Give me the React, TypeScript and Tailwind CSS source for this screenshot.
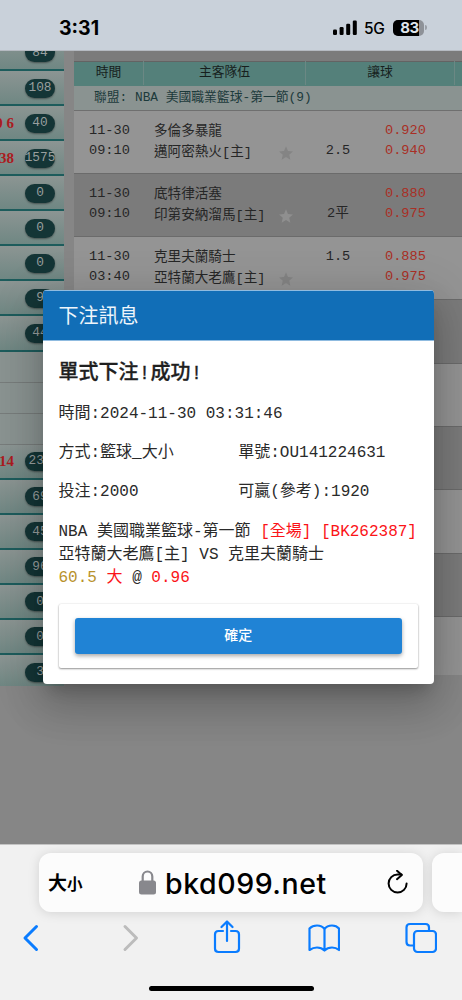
import clsx from "clsx";

const sideRows = [
  { count: "108" },
  { count: "40", score: "0 6" },
  { count: "1575", score: "38" },
  { count: "0" },
  { count: "0" },
  { count: "0" },
  { count: "9" },
  { count: "44" },
];

const sideRowsLower = [
  { count: "237", score: "14" },
  { count: "69" },
  { count: "45" },
  { count: "96" },
  { count: "0" },
  { count: "0" },
];

const games = [
  { date: "11-30", time: "09:10", away: "多倫多暴龍", home: "邁阿密熱火[主]", line: ["", "2.5"], odds: ["0.920", "0.940"] },
  { date: "11-30", time: "09:10", away: "底特律活塞", home: "印第安納溜馬[主]", line: ["", "2平"], odds: ["0.880", "0.975"] },
  { date: "11-30", time: "03:40", away: "克里夫蘭騎士", home: "亞特蘭大老鷹[主]", line: ["1.5", ""], odds: ["0.885", "0.975"] },
];

const mono = "font-['Liberation_Mono','Noto_Sans_CJK_TC',monospace]";

function StatusBar() {
  return (
    <header className="flex h-[51px] shrink-0 items-center border-b border-[#b5bac1] bg-[#c9d1da] pt-[5px] pl-[59px] font-['Inter',sans-serif] text-black">
      <span className="w-[274px] pt-0.5 text-[19.5px] font-bold">3:31</span>
      <svg width="24" height="16" viewBox="0 0 24 16">
        <rect x="0" y="9.5" width="4" height="5.5" rx="1.2" />
        <rect x="6.6" y="7" width="4" height="8" rx="1.2" />
        <rect x="13.2" y="3.7" width="4" height="11.3" rx="1.2" />
        <rect x="19.8" y="0.6" width="4" height="14.4" rx="1.2" />
      </svg>
      <span className="ml-[7px] w-[29px] pt-0.5 text-[15.5px] font-medium tracking-tight">5G</span>
      <div className="flex h-4 w-[31px] rounded-[5px] bg-[#8e9298]">
        <span className="flex w-[26px] items-center justify-end rounded-l-[5px] bg-black text-[15px] leading-4 font-bold tracking-[-0.3px] text-[#dfe4ea]">
          83
        </span>
      </div>
      <span className="ml-px h-[5px] w-[2px] rounded-r bg-[#9a9fa6]" />
    </header>
  );
}

function SideRow({ count, score, className }: { count: string; score?: string; className?: string }) {
  return (
    <div
      className={clsx(
        "flex shrink-0 items-center border-[#1d5c5c] bg-gradient-to-b from-[#8c9593] to-[#6f8783]",
        className ?? "h-[35.07px] border-b-2 pt-px",
      )}
    >
      <span className="flex w-[14px] justify-end font-['Liberation_Serif',serif] text-[15px] font-bold whitespace-pre text-[#ab1b1f]">
        {score}
      </span>
      <span className="ml-[11px] flex h-[19px] w-[30px] items-center justify-center rounded-full bg-[#143536] pb-px text-[12.8px] text-[#999f9f] shadow-[0_1px_2px_rgba(0,0,0,0.4)]">
        {count}
      </span>
    </div>
  );
}

function Sidebar() {
  return (
    <aside className="flex w-16 shrink-0 flex-col">
      <div className="flex h-5 flex-col justify-end overflow-hidden">
        <SideRow count="84" />
      </div>
      {sideRows.map((r, i) => (
        <SideRow key={i} {...r} />
      ))}
      {[0, 1, 2].map((i) => (
        <div key={i} className="h-[31px] shrink-0 border-b border-[#777c7b] bg-[#8a9391]" />
      ))}
      {sideRowsLower.map((r, i) => (
        <SideRow key={i} {...r} />
      ))}
      <SideRow count="3" className="h-[31px] pt-1" />
    </aside>
  );
}

function Star({ fill }: { fill: string }) {
  return (
    <svg width="14" height="14" viewBox="0 0 24 24" fill={fill}>
      <path d="M12 0.5l3.4 8 8.6.8-6.5 5.7 2 8.5L12 19l-7.500 4.500 2-8.500L0 9.300l8.600-.8z" />
    </svg>
  );
}

function GameTable() {
  return (
    <main className="ml-[10px] flex flex-1 flex-col">
      <div className="h-[10.5px] shrink-0 border-b border-[#636363] bg-[#7b7b7b]" />
      <div className="flex h-[24px] shrink-0 items-center bg-[#54807a] pb-[2px] text-center text-[12.8px] text-[#171f1e]">
        <span className="w-[69px]">時間</span>
        <span className="-my-1 h-[24px] w-px bg-[#6b8884]" />
        <span className="w-[161px]">主客隊伍</span>
        <span className="-my-1 h-[24px] w-px bg-[#6b8884]" />
        <span className="w-[148px]">讓球</span>
        <span className="-my-1 h-[24px] w-px bg-[#6b8884]" />
      </div>
      <div className="flex h-[25px] shrink-0 items-center border-b border-[#6f6f6f] bg-[#8a9391] pl-5 text-[12.8px] whitespace-pre text-[#1c3a3b]">
        聯盟: NBA 美國職業籃球-第一節(9)
      </div>
      {games.map((g, i) => (
        <div
          key={i}
          className={clsx(
            "flex h-[63.3px] shrink-0 border-b border-[#6b6b6b] pt-[10px] text-[13.6px] leading-[20.2px] text-[#262626]",
            i % 2 ? "bg-[#7b7b7b]" : "bg-[#949494]",
          )}
        >
          <div className="w-[80px] pl-[15px]">
            <div>{g.date}</div>
            <div>{g.time}</div>
          </div>
          <div className="w-[125px] leading-[21.3px] whitespace-nowrap">
            <div>{g.away}</div>
            <div>{g.home}</div>
          </div>
          <div className="w-[35px] pt-[25px]">
            <Star fill={i % 2 ? "#8f8f8f" : "#848484"} />
          </div>
          <div className="w-[48px] text-center">
            <div className="h-5">{g.line[0]}</div>
            <div>{g.line[1]}</div>
          </div>
          <div className="pl-[23px] text-[#a92f25]">
            <div>{g.odds[0]}</div>
            <div>{g.odds[1]}</div>
          </div>
        </div>
      ))}
      {[3, 4, 5, 6, 7].map((i) => (
        <div
          key={i}
          className={clsx("h-[63.3px] shrink-0 border-b border-[#6b6b6b]", i % 2 ? "bg-[#7b7b7b]" : "bg-[#949494]")}
        />
      ))}
      <div className="h-[58px] shrink-0 bg-[#949494]" />
    </main>
  );
}

function BetDialog() {
  return (
    <div className="absolute top-[290px] left-[42.5px] h-[394px] w-[391.5px] overflow-hidden rounded-[4px] bg-white text-base text-[#2a2a2a] shadow-[0_11px_15px_-7px_rgba(0,0,0,0.2),0_24px_38px_3px_rgba(0,0,0,0.14),0_9px_46px_8px_rgba(0,0,0,0.12)]">
      <h2 className="flex h-[50.5px] items-center border-t border-b border-[#8fbbe0] bg-[#116eb7] pt-[5px] pl-4 text-xl text-[#eef5fb]">下注訊息</h2>
      <div className="px-4 whitespace-nowrap">
        <h3 className="mt-[18px] text-xl leading-[30px] font-medium text-[#1f1f1f] [-webkit-text-stroke:0.3px_#1f1f1f]">
          單式下注!成功!
        </h3>
        <p className="mt-[13px] leading-6">時間:2024-11-30 03:31:46</p>
        <div className="mt-[15px] grid grid-cols-2 leading-6">
          <span>方式:籃球_大小</span>
          <span>單號:OU141224631</span>
        </div>
        <div className="mt-[15px] grid grid-cols-2 leading-6">
          <span>投注:2000</span>
          <span>可贏(參考):1920</span>
        </div>
        <div className="mt-[17px] leading-[23.3px]">
          <p>
            NBA 美國職業籃球-第一節 <span className="text-[#fb1418]">[全場] [BK262387]</span>
          </p>
          <p>亞特蘭大老鷹[主] VS 克里夫蘭騎士</p>
          <p>
            <span className="text-[#b8922b]">60.5</span> <span className="text-[#fb1418]">大</span> @{" "}
            <span className="text-[#fb1418]">0.96</span>
          </p>
        </div>
        <div className="mt-[14px] h-[64px] rounded-[2px] p-4 pt-[14px] shadow-[0_1px_2px_rgba(0,0,0,0.4),0_0_2px_rgba(0,0,0,0.12)]">
          <button className="flex h-9 w-full items-center justify-center rounded-[3px] bg-[#2083d5] pb-px text-sm font-medium text-white shadow-[0_2px_4px_rgba(0,0,0,0.35)]">
            確定
          </button>
        </div>
      </div>
    </div>
  );
}

function BrowserBar() {
  return (
    <footer className="flex h-[156px] shrink-0 flex-col border-t border-[#c4c4c4] bg-[#f1f1f1] font-['Inter','Noto_Sans_CJK_TC',sans-serif]">
      <div className="mt-2 ml-[39px] flex h-[59px] gap-[9px]">
        <div className="flex w-[384px] shrink-0 items-center rounded-xl bg-[#fcfcfc] pl-[9px] text-black shadow-[0_1px_12px_rgba(0,0,0,0.13)]">
          <span className="flex w-[91px] items-baseline pt-1 text-[19px] font-bold">
            大<span className="text-[15.5px]">小</span>
          </span>
          <svg width="17" height="25" viewBox="0 0 17 25">
            <rect x="0" y="10.500" width="17" height="14" rx="2.500" fill="#88888d" />
            <path d="M3.700 11.500V6.500a4.800 5 0 0 1 9.600 0V11.500" fill="none" stroke="#88888d" strokeWidth="2.200" />
          </svg>
          <span className="ml-[9px] w-[221px] pt-[3px] text-[28.5px] font-medium tracking-[0.55px]">bkd099.net</span>
          <svg width="22" height="26" viewBox="0 0 22 26" fill="none" stroke="#000" strokeWidth="2" strokeLinecap="round" strokeLinejoin="round">
            <path d="M20.600 13.500A9 9 0 1 1 11.600 4.500H15.500" />
            <path d="M11 0.800l4.800 4.200L11 9.200" />
          </svg>
        </div>
        <div className="flex-1 rounded-l-xl bg-[#fcfcfc] shadow-[0_1px_12px_rgba(0,0,0,0.13)]" />
      </div>
      <nav className="mt-[8px] flex justify-between pr-[25px] pl-[15px] text-[#0a7cff]">
        <svg width="32" height="34" viewBox="0 0 32 34" fill="none" stroke="currentColor" strokeWidth="3" strokeLinecap="round" strokeLinejoin="round">
          <path d="M21.500 6.500L10 18l11.500 11.500" />
        </svg>
        <svg width="32" height="34" viewBox="0 0 32 34" fill="none" stroke="#bcbcbc" strokeWidth="3" strokeLinecap="round" strokeLinejoin="round">
          <path d="M12 6.500L23.500 18 12 29.500" />
        </svg>
        <svg width="32" height="34" viewBox="0 0 32 34" fill="none" stroke="currentColor" strokeWidth="2.200" strokeLinecap="round" strokeLinejoin="round">
          <path d="M13 11H8.500Q5 11 5 14.500V28.500Q5 32 8.500 32H25.500Q29 32 29 28.500V14.500Q29 11 25.500 11H21" />
          <path d="M17 21V1.500M11.500 7L17 1.500 22.500 7" />
        </svg>
        <svg width="32" height="34" viewBox="0 0 32 34" fill="none" stroke="currentColor" strokeWidth="2.200" strokeLinecap="round" strokeLinejoin="round">
          <path d="M16.500 9Q14 5.500 9 5.500 4.500 5.500 1.500 8.500V30Q5 27.500 9 27.500 13.500 27.500 16.500 30.500 19.500 27.500 24 27.500 28 27.500 31 30V8.500Q28.500 5.500 24 5.500 19 5.500 16.500 9V30" />
        </svg>
        <svg width="32" height="34" viewBox="0 0 32 34" fill="none" stroke="currentColor" strokeWidth="2.200" strokeLinejoin="round">
          <rect x="9" y="11" width="22" height="21" rx="3.500" />
          <path d="M9 25.500H5Q1.500 25.500 1.500 22V7.500Q1.500 4 5 4H20.500Q24 4 24 7.500V11" />
        </svg>
      </nav>
      <div className="mt-[32px] ml-[149px] h-[5px] w-[165px] rounded-full bg-black" />
    </footer>
  );
}

export default function App() {
  return (
    <div lang="zh-Hant" className={clsx("relative flex h-[1000px] w-[462px] flex-col overflow-hidden", mono)}>
      <StatusBar />
      <div className="flex flex-1 overflow-hidden bg-[#868686]">
        <Sidebar />
        <GameTable />
      </div>
      <BetDialog />
      <BrowserBar />
    </div>
  );
}
